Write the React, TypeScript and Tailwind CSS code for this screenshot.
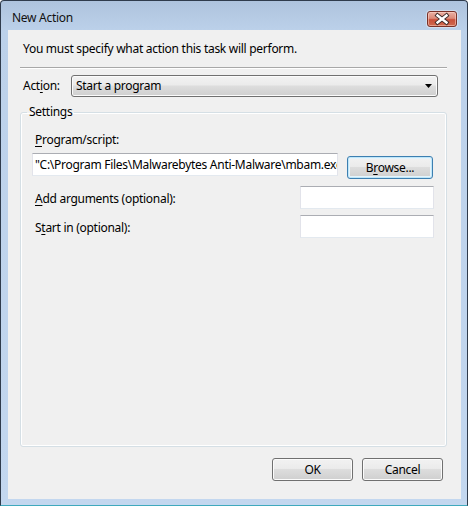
import React from "react";

function Mn({ children }: { children: React.ReactNode }) {
  return <span className="underline underline-offset-[2px] decoration-[1px]">{children}</span>;
}

function TextBox({ className = "", value = "" }: { className?: string; value?: string }) {
  return (
    <div
      className={`h-[23px] bg-white border border-[#e2e3ea] border-t-[#abadb3] border-b-[#e3e9ef] flex items-center px-[2px] overflow-hidden whitespace-nowrap text-[12px] leading-[16px] text-black ${className}`}
    >
      {value}
    </div>
  );
}

function PushButton({ children, className = "", focused = false }: { children: React.ReactNode; className?: string; focused?: boolean }) {
  return (
    <button
      className={`h-[23px] rounded-[3px] border text-[12px] leading-[16px] text-black bg-[linear-gradient(to_bottom,#f2f2f2_0%,#ebebeb_45%,#dddddd_50%,#cfcfcf_100%)] ${
        focused
          ? "border-[#3c7fb1] shadow-[inset_0_0_0_1px_#bfe6f9,inset_0_0_0_2px_#e6f4fb]"
          : "border-[#707070] shadow-[inset_0_0_0_1px_#fbfbfb]"
      } ${className}`}
    >
      {children}
    </button>
  );
}

export default function App() {
  return (
    <div className="w-[468px] h-[506px] bg-white font-['Noto_Sans',sans-serif] tracking-[-0.28px] text-black">
      <div className="flex h-full flex-col rounded-t-[4px] border border-[#2f3b4c] border-b-[#3fa9bd] bg-[linear-gradient(to_bottom,#aec3dd_0px,#bcd1ea_30px,#c3d7ef_100%)] pl-[7px] pr-[6px] pb-[6px]">
        {/* title bar */}
        <div className="flex h-[29px] items-start justify-between pt-[9px] pl-[4px] pr-[4px]">
          <span className="text-[12px] leading-[16px] text-[#111]">New Action</span>
          <div className="mt-[1px] h-[16px] w-[30px] rounded-[3px] border border-[#7b3127] bg-[linear-gradient(to_bottom,#eab1a4_0%,#dc8a78_45%,#c9503a_55%,#d06a4f_100%)] shadow-[inset_0_0_0_1px_rgba(255,220,210,0.5),0_0_0_1px_rgba(255,255,255,0.35)]">
            <svg width="28" height="14" viewBox="0 0 28 14">
              <path d="M9.5 3.5 L18.5 10.5 M18.5 3.5 L9.5 10.5" stroke="#3b2a28" strokeWidth="4.2" strokeLinecap="square" />
              <path d="M9.5 3.5 L18.5 10.5 M18.5 3.5 L9.5 10.5" stroke="#ffffff" strokeWidth="2.4" strokeLinecap="square" />
            </svg>
          </div>
        </div>

        {/* client area */}
        <div className="flex flex-1 flex-col bg-[#f0f0f0]">
          <p className="pl-[15px] pt-[11px] text-[12px] leading-[16px]">You must specify what action this task will perform.</p>
          <div className="ml-[12px] mr-[14px] mt-[10px] h-[2px] border-t border-b border-t-[#a8a8a8] border-b-white" />

          <div className="mt-[6px] flex items-center pl-[15px]">
            <span className="w-[48px] text-[12px] leading-[16px]">
              Act<Mn>i</Mn>on:
            </span>
            <div className="flex h-[22px] w-[367px] items-center justify-between rounded-[3px] border border-[#707070] bg-[linear-gradient(to_bottom,#f2f2f2_0%,#ebebeb_45%,#dddddd_50%,#cfcfcf_100%)] pl-[4px] pr-[4px] shadow-[inset_0_0_0_1px_#fbfbfb]">
              <span className="text-[12px] leading-[16px]">Start a program</span>
              <svg width="8" height="5" viewBox="0 0 8 5">
                <path d="M0 0 H7 L3.5 4 Z" fill="#000" />
              </svg>
            </div>
          </div>

          <fieldset className="ml-[12px] mt-[7px] h-[343px] w-[427px] rounded-[3px] border border-[#d5dfe5] shadow-[inset_0_0_0_1px_#ffffff]">
            <legend className="ml-[6px] px-[2px] text-[12px] leading-[16px]">Settings</legend>
            <div className="pl-[11px] pt-[12px]">
              <div className="ml-[3px] text-[12px] leading-[16px]">
                <Mn>P</Mn>rogram/script:
              </div>
              <div className="mt-[5px] flex items-start gap-[9px]">
                <TextBox className="w-[306px]" value={'"C:\\Program Files\\Malwarebytes Anti-Malware\\mbam.exe"'} />
                <PushButton focused className="mt-[3px] h-[22px] w-[86px]">
                  B<Mn>r</Mn>owse...
                </PushButton>
              </div>
              <div className="mt-[7px] flex w-[402px] items-center justify-between">
                <span className="ml-[3px] pt-[2px] text-[12px] leading-[16px]">
                  <Mn>A</Mn>dd arguments (optional):
                </span>
                <TextBox className="w-[134px]" />
              </div>
              <div className="mt-[6px] flex w-[402px] items-center justify-between">
                <span className="ml-[3px] pt-[2px] text-[12px] leading-[16px]">
                  S<Mn>t</Mn>art in (optional):
                </span>
                <TextBox className="w-[134px]" />
              </div>
            </div>
          </fieldset>

          <div className="mt-[11px] flex justify-end gap-[9px] pr-[18px]">
            <PushButton className="w-[81px]">OK</PushButton>
            <PushButton className="w-[81px]">Cancel</PushButton>
          </div>
        </div>
      </div>
    </div>
  );
}
